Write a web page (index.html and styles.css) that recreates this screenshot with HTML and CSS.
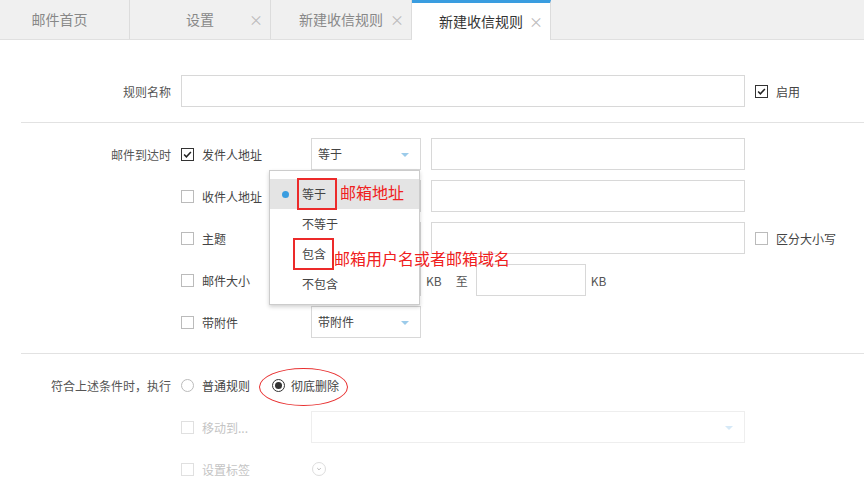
FILE: index.html
```html
<!DOCTYPE html>
<html lang="zh-CN">
<head>
  <meta charset="utf-8">
  <title>新建收信规则</title>
  <link rel="stylesheet" href="styles.css">
</head>
<body>
  <!-- Tab bar -->
  <div class="tabs">
    <div class="tab first">邮件首页</div>
    <div class="tab">设置<span class="close">×</span></div>
    <div class="tab">新建收信规则<span class="close">×</span></div>
    <div class="tab active">新建收信规则<span class="close">×</span></div>
  </div>

  <!-- Rule name -->
  <div class="section top">
    <div class="row">
      <div class="label">规则名称</div>
      <div class="input name-input"></div>
      <span class="box checked"><svg viewBox="0 0 13 13"><path d="M2.5 6.5 L5.2 9.2 L10.5 3.6" fill="none" stroke="#222" stroke-width="1.8"/></svg></span>
      <span class="text">启用</span>
    </div>
  </div>

  <!-- Conditions -->
  <div class="section">
    <div class="row">
      <div class="label">邮件到达时</div>
      <div class="check-cell">
        <span class="box checked"><svg viewBox="0 0 13 13"><path d="M2.5 6.5 L5.2 9.2 L10.5 3.6" fill="none" stroke="#222" stroke-width="1.8"/></svg></span>
        <span class="text">发件人地址</span>
      </div>
      <div class="select-wrap">
        <div class="select">等于<span class="arrow"></span></div>
        <!-- open menu -->
        <div class="menu">
          <div class="item on"><span class="dot"></span>等于</div>
          <div class="item">不等于</div>
          <div class="item">包含</div>
          <div class="item">不包含</div>
          <div class="mark mark1"></div>
          <div class="mark mark2"></div>
          <div class="note note1">邮箱地址</div>
          <div class="note note2">邮箱用户名或者邮箱域名</div>
        </div>
      </div>
      <div class="input value-input"></div>
    </div>
    <div class="row">
      <div class="label"></div>
      <div class="check-cell"><span class="box"></span><span class="text">收件人地址</span></div>
      <div class="select"><span class="arrow"></span></div>
      <div class="input value-input"></div>
    </div>
    <div class="row">
      <div class="label"></div>
      <div class="check-cell"><span class="box"></span><span class="text">主题</span></div>
      <div class="select"><span class="arrow"></span></div>
      <div class="input value-input"></div>
      <span class="box"></span>
      <span class="text">区分大小写</span>
    </div>
    <div class="row">
      <div class="label"></div>
      <div class="check-cell"><span class="box"></span><span class="text">邮件大小</span></div>
      <div class="input size-input"></div>
      <span class="unit">KB</span>
      <span class="to">至</span>
      <div class="input size-input"></div>
      <span class="unit">KB</span>
    </div>
    <div class="row">
      <div class="label"></div>
      <div class="check-cell"><span class="box"></span><span class="text">带附件</span></div>
      <div class="select">带附件<span class="arrow"></span></div>
    </div>
  </div>

  <!-- Actions -->
  <div class="section last">
    <div class="row">
      <div class="label">符合上述条件时，执行</div>
      <label class="radio-item"><span class="radio"></span>普通规则</label>
      <label class="radio-item picked"><span class="radio on"></span>彻底删除<span class="ring"></span></label>
    </div>
    <div class="row off">
      <div class="label"></div>
      <div class="check-cell"><span class="box"></span><span class="text">移动到...</span></div>
      <div class="select long"><span class="arrow"></span></div>
    </div>
    <div class="row off">
      <div class="label"></div>
      <div class="check-cell"><span class="box"></span><span class="text">设置标签</span></div>
      <span class="chev"><svg viewBox="0 0 14 14"><path d="M5 6 L7 8 L9 6" fill="none" stroke="#aaa" stroke-width="1"/></svg></span>
    </div>
  </div>
</body>
</html>
```

FILE: styles.css
```css
/* Base */
body {
  margin: 0;
  background: #fff;
  font-family: "Noto Sans CJK SC", "Microsoft YaHei", sans-serif;
  font-size: 12px;
  color: #444;
}

/* Tabs */
.tabs {
  display: flex;
  height: 39px;
  background: #f0f0f0;
  border-bottom: 1px solid #e0e0e0;
}

.tab {
  position: relative;
  width: 140px;
  line-height: 39px;
  text-align: center;
  font-size: 14px;
  color: #888;
  border-right: 1px solid #dcdcdc;
}

.tab.first {
  width: 130px;
  padding-right: 10px;
  box-sizing: border-box;
}

.tab.active {
  width: 138px;
  height: 37px;
  line-height: 37px;
  background: #fff;
  color: #333;
  border-top: 3px solid #3a9de0;
  margin-bottom: -1px;
}

.tab .close {
  position: absolute;
  right: 7px;
  top: 0;
  font-size: 14px;
  color: #bbb;
}

/* Sections */
.section {
  margin-left: 21px;
  padding: 15px 0;
  border-bottom: 1px solid #e2e2e2;
  display: flex;
  flex-direction: column;
  gap: 10px;
}

.section.top {
  padding-top: 35px;
}

.section.last {
  border-bottom: none;
}

.row {
  display: flex;
  align-items: center;
  height: 32px;
}

.label {
  width: 150px;
  margin-right: 10px;
  text-align: right;
  color: #555;
  white-space: nowrap;
}

.check-cell {
  width: 130px;
  display: flex;
  align-items: center;
}

.text {
  margin-left: 8px;
  color: #444;
}

/* Checkbox */
.box {
  display: inline-block;
  width: 11px;
  height: 11px;
  border: 1px solid #bbb;
  flex: none;
}

.box.checked {
  border-color: #333;
}

.box svg {
  display: block;
  width: 11px;
  height: 11px;
}

.name-input + .box,
.value-input + .box {
  margin-left: 10px;
}

/* Fields */
.input {
  border: 1px solid #d8d8d8;
  box-sizing: border-box;
  height: 32px;
}

.name-input {
  width: 564px;
}

.value-input {
  width: 314px;
  margin-left: 10px;
}

.size-input {
  width: 110px;
}

.unit {
  margin-left: 5px;
  color: #555;
}

.to {
  margin: 0 8px 0 14px;
  color: #555;
}

.select-wrap {
  position: relative;
}

.select {
  position: relative;
  width: 110px;
  height: 32px;
  box-sizing: border-box;
  border: 1px solid #d8d8d8;
  padding-left: 6px;
  line-height: 30px;
  color: #444;
}

.select.long {
  width: 434px;
}

.arrow {
  position: absolute;
  right: 11px;
  top: 14px;
  border-left: 4px solid transparent;
  border-right: 4px solid transparent;
  border-top: 4px solid #9ccbea;
}

/* Open dropdown menu */
.menu {
  position: absolute;
  z-index: 2;
  top: 32px;
  left: -42px;
  width: 151px;
  height: 135px;
  box-sizing: border-box;
  padding-top: 8px;
  background: #fff;
  border: 1px solid #ccc;
  box-shadow: 0 2px 4px rgba(0, 0, 0, 0.18);
}

.item {
  position: relative;
  height: 30px;
  line-height: 30px;
  padding-left: 32px;
  color: #444;
}

.item.on {
  background: #e4e4e4;
}

.dot {
  position: absolute;
  left: 12px;
  top: 12px;
  width: 7px;
  height: 7px;
  border-radius: 50%;
  background: #3a9de0;
}

/* Red annotations */
.mark {
  position: absolute;
  border: 2px solid #ec2a2a;
  box-sizing: border-box;
}

.mark1 {
  left: 27px;
  top: 7px;
  width: 40px;
  height: 32px;
}

.mark2 {
  left: 23px;
  top: 67px;
  width: 41px;
  height: 32px;
}

.note {
  position: absolute;
  font-size: 16px;
  line-height: 20px;
  color: #f02020;
  white-space: nowrap;
}

.note1 {
  left: 70px;
  top: 11px;
}

.note2 {
  left: 64px;
  top: 77px;
}

/* Radios */
.radio-item {
  position: relative;
  display: flex;
  align-items: center;
  height: 32px;
  margin-right: 22px;
  color: #444;
}

.radio {
  width: 11px;
  height: 11px;
  border: 1px solid #bbb;
  border-radius: 50%;
  margin-right: 8px;
  position: relative;
}

.radio.on {
  border-color: #333;
  margin-right: 6px;
}

.radio.on::after {
  content: "";
  position: absolute;
  left: 2px;
  top: 2px;
  width: 7px;
  height: 7px;
  border-radius: 50%;
  background: #333;
}

.ring {
  position: absolute;
  left: -13px;
  top: -1px;
  width: 89px;
  height: 38px;
  box-sizing: border-box;
  border: 1px solid #e83030;
  border-radius: 50%;
}

/* Disabled rows */
.row.off .box {
  border-color: #e0e0e0;
}

.row.off .text {
  color: #c4c4c4;
}

.row.off .select {
  border-color: #eee;
}

.row.off .arrow {
  border-top-color: #d6e9f7;
}

.chev {
  width: 14px;
  height: 14px;
  margin-left: 1px;
  border: 1px solid #ddd;
  border-radius: 50%;
  box-sizing: border-box;
}

.chev svg {
  display: block;
  width: 12px;
  height: 12px;
}
```
